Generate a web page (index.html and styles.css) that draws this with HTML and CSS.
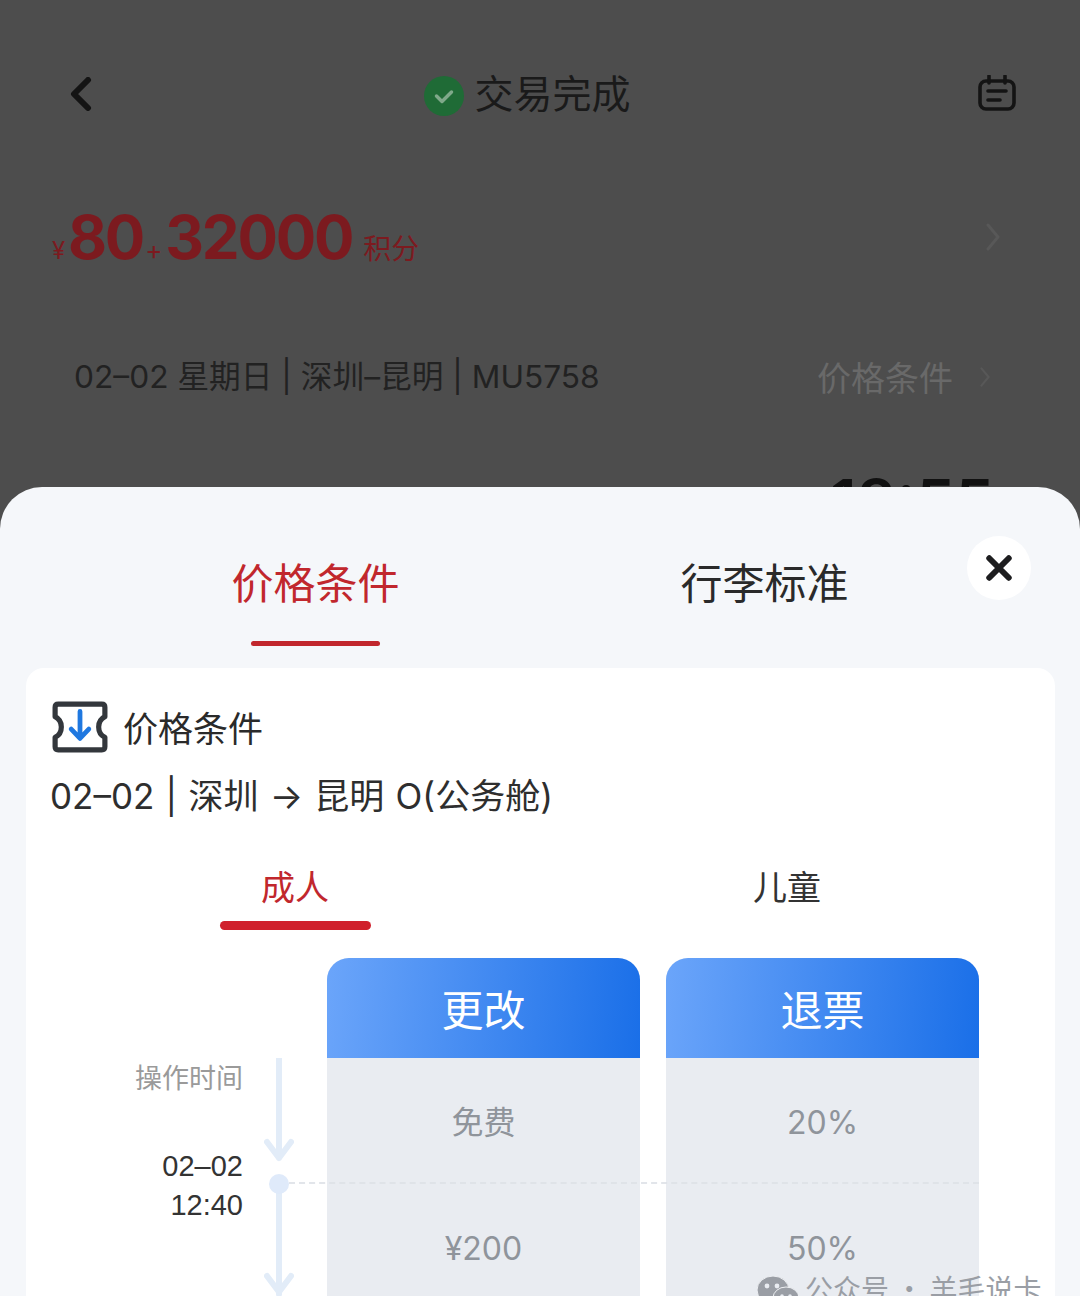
FILE: index.html
```html
<!DOCTYPE html>
<html lang="zh-CN">
<head>
<meta charset="utf-8">
<title>价格条件</title>
<link rel="stylesheet" href="styles.css">
</head>
<body>
<div class="page">
  <section class="behind">
    <header class="nav">
      <svg class="back" viewBox="0 0 24 34" aria-hidden="true"><path d="M19 3 L5 17 L19 31"/></svg>
      <div class="status">
        <svg class="ok" viewBox="0 0 40 40" aria-hidden="true"><circle cx="20" cy="20" r="20"/><path d="M12.5 20 L18 25.5 L27.5 16"/></svg>
        <span>交易完成</span>
      </div>
      <svg class="cal" viewBox="0 0 38 36" aria-hidden="true"><rect x="2" y="6" width="34" height="28" rx="6"/><path d="M11 1 V8 M27 1 V8 M10 16 H28 M10 25 H22"/></svg>
    </header>
    <div class="price">
      <span class="yen">¥</span><span class="amount">80</span><span class="plus">+</span><span class="amount">32000</span><span class="points">积分</span>
      <svg class="chev dim" viewBox="0 0 14 28" aria-hidden="true"><path d="M2 2 L12 14 L2 26"/></svg>
    </div>
    <div class="flight">
      <span class="flight-text">02–02 星期日 | 深圳–昆明 | MU5758</span>
      <span class="flight-link">价格条件</span>
      <svg class="chev small" viewBox="0 0 14 28" aria-hidden="true"><path d="M2 2 L12 14 L2 26"/></svg>
    </div>
    <div class="time-row">18:55</div>
  </section>

  <section class="sheet">
    <button class="close" aria-label="关闭"><svg viewBox="0 0 24 24" aria-hidden="true"><path d="M3 3 L21 21 M21 3 L3 21"/></svg></button>
    <nav class="tabs">
      <div class="tab active">价格条件</div>
      <div class="tab">行李标准</div>
    </nav>
    <div class="card">
      <div class="card-title">
        <svg class="ticket" viewBox="0 0 54 50" aria-hidden="true">
          <path class="ticket-body" d="M6 3 H48 Q51 3 51 6 V15 Q45 18 45 25 Q45 32 51 35 V44 Q51 47 48 47 H6 Q3 47 3 44 V35 Q9 32 9 25 Q9 18 3 15 V6 Q3 3 6 3 Z"/>
          <path class="ticket-arrow" d="M27 10 V35 M18.5 27 L27 36 L35.5 27"/>
        </svg>
        <span>价格条件</span>
      </div>
      <div class="route">02–02 | 深圳 → 昆明 O(公务舱)</div>
      <div class="subtabs">
        <div class="subtab active">成人</div>
        <div class="subtab">儿童</div>
      </div>
      <div class="rules">
        <div class="labels">
          <div class="label-head">操作时间</div>
          <div class="label-time">02–02<br>12:40</div>
        </div>
        <svg class="timeline" viewBox="0 0 30 238" aria-hidden="true">
          <path d="M15 0 V100 M3 84 L15 100 L27 84 M15 126 V236 M3 218 L15 234 L27 218"/>
          <circle cx="15" cy="126" r="10"/>
        </svg>
        <div class="col">
          <div class="col-head">更改</div>
          <div class="col-cell">免费</div>
          <div class="col-cell">¥200</div>
        </div>
        <div class="col">
          <div class="col-head">退票</div>
          <div class="col-cell">20%</div>
          <div class="col-cell">50%</div>
        </div>
        <div class="divider"></div>
      </div>
    </div>
    <div class="watermark">
      <svg class="wechat" viewBox="0 0 42 30" aria-hidden="true">
        <ellipse class="w-back" cx="16" cy="14" rx="16" ry="14"/>
        <ellipse class="w-front" cx="29" cy="22" rx="13" ry="11"/>
        <circle class="w-eye" cx="10" cy="10" r="2.4"/><circle class="w-eye" cx="20" cy="10" r="2.4"/>
        <circle class="w-eye2" cx="25" cy="20" r="1.8"/><circle class="w-eye2" cx="33" cy="20" r="1.8"/>
      </svg>
      <span>公众号 · 羊毛说卡</span>
    </div>
  </section>
</div>
</body>
</html>
```
FILE: styles.css
```css
* { box-sizing: border-box; }
html, body { margin: 0; padding: 0; height: 1296px; overflow: hidden; background: #4d4d4d; }
body { font-family: "Noto Sans CJK SC", "Noto Sans", sans-serif; }
.page { width: 1080px; height: 1296px; overflow: hidden; display: flex; flex-direction: column; }

.behind { height: 487px; flex: none; overflow: hidden; background: #4d4d4d; padding: 72px 0 0; color: #1c1c1c; }
.nav { display: flex; align-items: center; justify-content: space-between; height: 44px; padding: 0 64px 0 69px; position: relative; }
.back { width: 24px; height: 34px; }
.back path { fill: none; stroke: #141414; stroke-width: 6; stroke-linecap: round; stroke-linejoin: round; }
.status { display: flex; align-items: center; gap: 10px; font-size: 39px; line-height: 44px; font-weight: 400; color: #1a1a1a; margin-left: -16px; }
.status span { margin-top: -6px; }
.ok { width: 40px; height: 40px; margin-top: 4px; }
.ok circle { fill: #1f6b36; }
.ok path { fill: none; stroke: #7fa98a; stroke-width: 3.5; stroke-linecap: round; stroke-linejoin: round; }
.cal { width: 38px; height: 36px; margin-top: -3px; }
.cal rect, .cal path { fill: none; stroke: #141414; stroke-width: 3.6; stroke-linecap: round; }

.price { display: flex; align-items: baseline; height: 76px; margin-top: 83px; padding: 0 80px 0 52px; color: #7c1a1f; font-family: Inter, "Liberation Sans", sans-serif; line-height: 76px; }
.yen { font-size: 24px; width: 16px; }
.amount { font-size: 60px; font-weight: 700; letter-spacing: -2.2px; }
.plus { font-size: 26px; margin: 0 3px 0 2px; }
.points { font-family: "Noto Sans CJK SC", sans-serif; font-size: 28px; margin-left: 11px; font-weight: 400; }
.chev { fill: none; }
.chev path { fill: none; stroke: #585858; stroke-width: 3; stroke-linecap: round; stroke-linejoin: round; }
.chev.dim { width: 14px; height: 28px; margin-left: auto; align-self: center; }
.chev.small { width: 10px; height: 20px; margin-left: 27px; }

.flight { display: flex; align-items: center; height: 44px; margin-top: 80px; padding: 0 90px 0 74px; }
.flight-text { font-family: Inter, "Noto Sans CJK SC", sans-serif; font-size: 31.7px; line-height: 44px; font-weight: 400; color: #222; white-space: nowrap; }
.flight-link { margin-left: auto; font-size: 34px; line-height: 44px; font-weight: 400; color: #696969; }
.time-row { text-align: right; padding-right: 86px; margin-top: 68px; font-family: Inter, "Liberation Sans", sans-serif; font-size: 62px; line-height: 70px; font-weight: 600; color: #111; }

.sheet { flex: 1; position: relative; background: #f5f7fa; border-radius: 42px 42px 0 0; padding: 0 25px 0 26px; }
.close { position: absolute; right: 49px; top: 49px; width: 64px; height: 64px; border: 0; padding: 0; border-radius: 50%; background: #fff; display: flex; align-items: center; justify-content: center; }
.close svg { width: 26px; height: 26px; }
.close path { fill: none; stroke: #1d1d1f; stroke-width: 5.5; stroke-linecap: round; }

.tabs { display: grid; grid-template-columns: 449px 449px; margin-left: 65px; height: 181px; padding-top: 64px; }
.tab { position: relative; text-align: center; font-size: 42px; line-height: 60px; font-weight: 400; color: #2a2a2a; height: 95px; }
.tab.active { color: #c1272d; }
.tab.active::after { content: ""; position: absolute; left: 160px; bottom: 0; width: 129px; height: 5px; border-radius: 3px; background: #c1272d; }

.card { background: #fff; border-radius: 18px 18px 0 0; height: 628px; padding: 32px 0 0 25px; }
.card-title { display: flex; align-items: center; gap: 15px; height: 54px; font-size: 35px; font-weight: 400; color: #2a2a2a; line-height: 52px; }
.ticket { width: 56px; height: 52px; margin-left: 1px; }
.ticket-body { fill: #fff; stroke: #33373c; stroke-width: 5; stroke-linejoin: round; }
.ticket-arrow { fill: none; stroke: #1f78e0; stroke-width: 4.6; stroke-linecap: round; stroke-linejoin: round; }
.route { font-family: Inter, "Noto Sans CJK SC", sans-serif; margin-top: 17px; margin-left: -1px; font-size: 35px; line-height: 50px; font-weight: 400; word-spacing: 1.4px; color: #2e2e2e; white-space: nowrap; }
.subtabs { display: grid; grid-template-columns: 492px 492px; margin: 40px 0 0 -2px; }
.subtab { position: relative; text-align: center; font-size: 34px; line-height: 50px; font-weight: 400; color: #333; height: 69px; }
.subtab.active { color: #c1272d; }
.subtab.active::after { content: ""; position: absolute; left: 171px; bottom: 0; width: 151px; height: 9px; border-radius: 5px; background: #d0202c; }

.rules { position: relative; display: flex; margin: 28px 0 0 0; align-items: flex-start; }
.labels { width: 192px; padding-top: 100px; text-align: right; }
.label-head { font-size: 27px; line-height: 38px; font-weight: 400; color: #9a9a9a; }
.label-time { margin-top: 51px; font-family: "Liberation Sans", Arial, sans-serif; font-size: 29px; line-height: 39px; font-weight: 400; color: #333; }
.timeline { width: 30px; height: 238px; margin: 100px 0 0 21px; flex: none; }
.timeline path { fill: none; stroke: #e2ecf8; stroke-width: 6; stroke-linecap: round; stroke-linejoin: round; }
.timeline circle { fill: #dfeafa; }
.col { width: 313px; flex: none; background: #e9ecf1; border-radius: 22px 22px 0 0; height: 350px; margin-left: 33px; text-align: center; }
.col + .col { margin-left: 26px; }
.col-head { height: 100px; border-radius: 22px 22px 0 0; background: linear-gradient(95deg, #6ba5fa 0%, #1a6fe8 100%); color: #fff; font-size: 42px; line-height: 100px; font-weight: 400; }
.col-cell { height: 126px; line-height: 126px; padding-top: 2px; font-size: 32px; font-weight: 400; font-family: Inter, "Noto Sans CJK SC", sans-serif; color: #8f949b; }
.divider { position: absolute; left: 238px; top: 224px; width: 690px; border-top: 2px dashed #dfe3e8; opacity: .9; }

.watermark { position: absolute; left: 757px; top: 783px; display: flex; align-items: center; gap: 6px; font-size: 28px; line-height: 36px; color: #9a9ea5; font-weight: 400; white-space: nowrap; }
.wechat { width: 42px; height: 30px; margin-top: 5px; }
.w-back, .w-front { fill: #9a9ea5; stroke: #eef0f3; stroke-width: 1; }
.w-eye, .w-eye2 { fill: #e9ecf1; }
```
